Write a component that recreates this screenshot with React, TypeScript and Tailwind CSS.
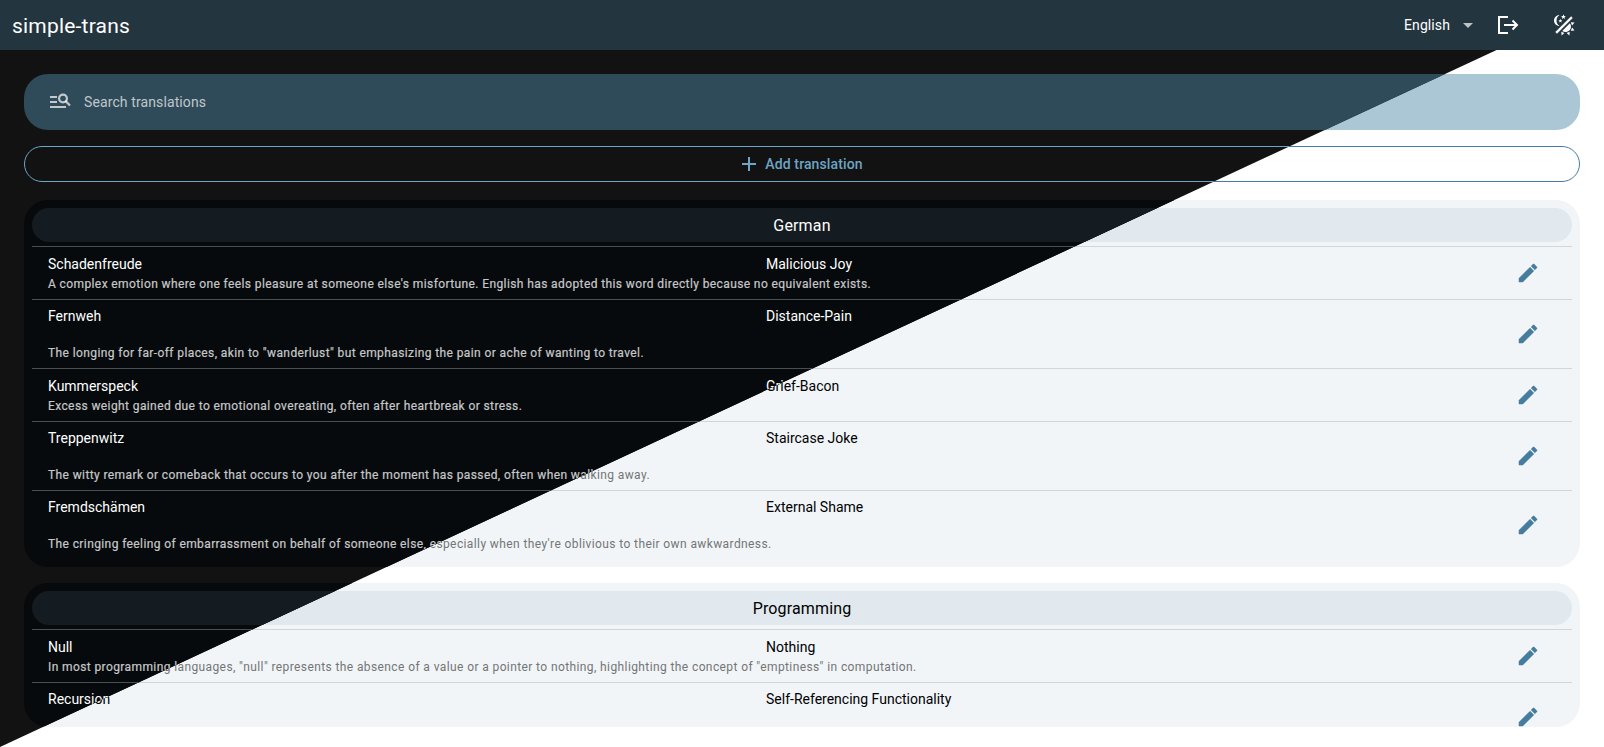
import React from "react";
import { MdAdd } from "react-icons/md";

type Entry = { term: string; value: string; note: string; tall?: boolean };
type Group = { name: string; entries: Entry[]; cut?: boolean };

const groups: Group[] = [
  {
    name: "German",
    entries: [
      { term: "Schadenfreude", value: "Malicious Joy", note: "A complex emotion where one feels pleasure at someone else's misfortune. English has adopted this word directly because no equivalent exists." },
      { term: "Fernweh", value: "Distance-Pain", note: "The longing for far-off places, akin to \"wanderlust\" but emphasizing the pain or ache of wanting to travel.", tall: true },
      { term: "Kummerspeck", value: "Grief-Bacon", note: "Excess weight gained due to emotional overeating, often after heartbreak or stress." },
      { term: "Treppenwitz", value: "Staircase Joke", note: "The witty remark or comeback that occurs to you after the moment has passed, often when walking away.", tall: true },
      { term: "Fremdschämen", value: "External Shame", note: "The cringing feeling of embarrassment on behalf of someone else, especially when they're oblivious to their own awkwardness.", tall: true },
    ],
  },
  {
    name: "Programming",
    cut: true,
    entries: [
      { term: "Null", value: "Nothing", note: "In most programming languages, \"null\" represents the absence of a value or a pointer to nothing, highlighting the concept of \"emptiness\" in computation." },
      { term: "Recursion", value: "Self-Referencing Functionality", note: "", tall: true },
    ],
  },
];

const light = {
  page: "bg-white text-black",
  search: "bg-[#abc7d6] text-black/60",
  accent: "text-[#467d9e]",
  outline: "border-[#467d9e]",
  card: "bg-[#f1f5f8]",
  pill: "bg-[#e1e9ee]",
  line: "border-[#d1d6d9]",
  note: "text-[#747676]",
};

const dark: typeof light = {
  page: "bg-[#121212] text-white",
  search: "bg-[#2f4b59] text-white/70",
  accent: "text-[#6ca5c5]",
  outline: "border-[#6ca5c5]",
  card: "bg-[#060a0d]",
  pill: "bg-[#141c21]",
  line: "border-[#4c4f51]",
  note: "text-[#c6c7c8] [-webkit-text-stroke:0.2px]",
};

function PencilIcon({ className }: { className: string }) {
  return (
    <svg viewBox="0 0 24 24" className={className} fill="currentColor">
      <path
        d="M20.71 7.04C21.1 6.65 21.1 6 20.71 5.63L18.37 3.29C18 2.9 17.35 2.9 16.96 3.29L15.12 5.12L18.87 8.87L20.71 7.04M3 17.25V21H6.75L17.81 9.93L14.06 6.18L3 17.25Z"
        stroke="currentColor"
        strokeWidth="0.5"
      />
    </svg>
  );
}

function SearchListIcon() {
  return (
    <svg viewBox="0 0 24 24" className="size-6" fill="none" stroke="currentColor" strokeWidth="2.2">
      <path d="M2 7H9M2 12H9M2 17H18M17.3 10.8L22 15.5" />
      <circle cx="15" cy="8.5" r="3.9" />
    </svg>
  );
}

function ThemeIcon() {
  return (
    <svg viewBox="0 0 24 24" className="size-6" fill="currentColor">
      <path d="M7.5 2C5.7 3.2 4.5 5.2 4.5 7.5S5.7 11.8 7.5 13C4.5 13 2 10.5 2 7.5S4.5 2 7.5 2" />
      <path d="M19.1 3.5L20.5 4.9L5 20.5L3.5 19.1L19.1 3.5" stroke="currentColor" strokeWidth="0.3" />
      <path d="M12.9 5.9L11.4 5L9.9 5.9L10.3 4.2L9 3L10.8 2.9L11.4 1.3L12.1 2.9L13.8 3L12.5 4.2L12.9 5.9" />
      <path d="M9.6 9.5L8.4 8.8L7.2 9.5L7.5 8.2L6.4 7.3L7.9 7.2L8.4 5.8L8.9 7.2L10.3 7.3L9.3 8.2L9.6 9.5" />
      <path d="M19 13.5C19 16.5 16.5 19 13.5 19C12.3 19 11.1 18.6 10.2 17.9L17.9 10.2C18.6 11.1 19 12.3 19 13.5M14.6 20.1L17.7 18.8L17.4 22.5L14.6 20.1M18.8 17.7L20.1 14.6L22.5 17.4L18.8 17.7M20.1 12.4L18.8 9.3L22.5 9.6L20.1 12.4M9.3 18.8L12.4 20.1L9.6 22.5L9.3 18.8" />
    </svg>
  );
}

function Row({ entry, t }: { entry: Entry; t: typeof light }) {
  return (
    <div className={`flex shrink-0 items-center border-t ${t.line} ${entry.tall ? "h-[69px]" : "h-[53px]"}`}>
      <div className={`flex h-full min-w-0 flex-1 flex-col pl-4 ${entry.tall ? "pt-[6px]" : "pt-[7px]"}`}>
        <div className="flex text-[14px] leading-5">
          <span className="w-[718px]">{entry.term}</span>
          <span>{entry.value}</span>
        </div>
        <div className={`text-[12px] leading-5 tracking-[0.395px] whitespace-nowrap ${t.note} ${entry.tall ? "mt-[17px]" : ""}`}>
          {entry.note}
        </div>
      </div>
      <PencilIcon className={`mr-8 size-6 shrink-0 ${t.accent}`} />
    </div>
  );
}

function Content({ t }: { t: typeof light }) {
  return (
    <div className={`flex h-[697px] flex-col px-6 pt-6 ${t.page}`}>
      <div className={`flex h-14 shrink-0 items-center rounded-[24px] pl-6 ${t.search}`}>
        <SearchListIcon />
        <span className="ml-3 text-[14px] tracking-[0.11px]">Search translations</span>
      </div>
      <div className={`mt-4 flex h-9 shrink-0 items-center justify-center rounded-full border text-[14px] font-medium ${t.accent} ${t.outline}`}>
        <MdAdd className="mr-1 -ml-1 size-6" />
        <span className="tracking-[0.12px]">Add translation</span>
      </div>
      <div className="mt-[18px] flex flex-col gap-4">
        {groups.map((g) => (
          <section key={g.name} className={`flex flex-col overflow-hidden rounded-[24px] px-2 pt-2 ${t.card} ${g.cut ? "h-36" : "h-[367px]"}`}>
            <h2 className={`mb-1 flex h-[34px] shrink-0 items-center justify-center rounded-full pt-px text-[16px] tracking-[0.15px] ${t.pill}`}>{g.name}</h2>
            {g.entries.map((e) => (
              <Row key={e.term} entry={e} t={t} />
            ))}
          </section>
        ))}
      </div>
    </div>
  );
}

export default function App() {
  return (
    <div className="h-[747px] w-[1604px] overflow-hidden font-['Roboto',sans-serif]">
      <header className="flex h-[50px] items-center bg-[#23353f] pr-7 pl-3 text-white">
        <h1 className="pt-[3px] text-[21px] tracking-[0.2px]">simple-trans</h1>
        <div className="ml-auto flex items-center">
          <span className="text-[14px] tracking-[0.1px]">English</span>
          <svg viewBox="0 0 10 5" className="mt-px ml-[13px] h-[5px] w-[10px] text-white/70" fill="currentColor">
            <path d="M0 0H10L5 5Z" />
          </svg>
          <svg viewBox="0 0 24 24" className="ml-[22px] size-6" fill="none" stroke="currentColor" strokeWidth="2">
            <path d="M13 4H4V20H13M9 12H21.5M17.5 7.5L22 12L17.5 16.5" />
          </svg>
          <span className="ml-[33px]">
            <ThemeIcon />
          </span>
        </div>
      </header>
      <main className="relative">
        <Content t={light} />
        <div aria-hidden="true" className="absolute inset-0 [clip-path:polygon(0_0,1496.6px_0,0_697px)]">
          <Content t={dark} />
        </div>
      </main>
    </div>
  );
}
